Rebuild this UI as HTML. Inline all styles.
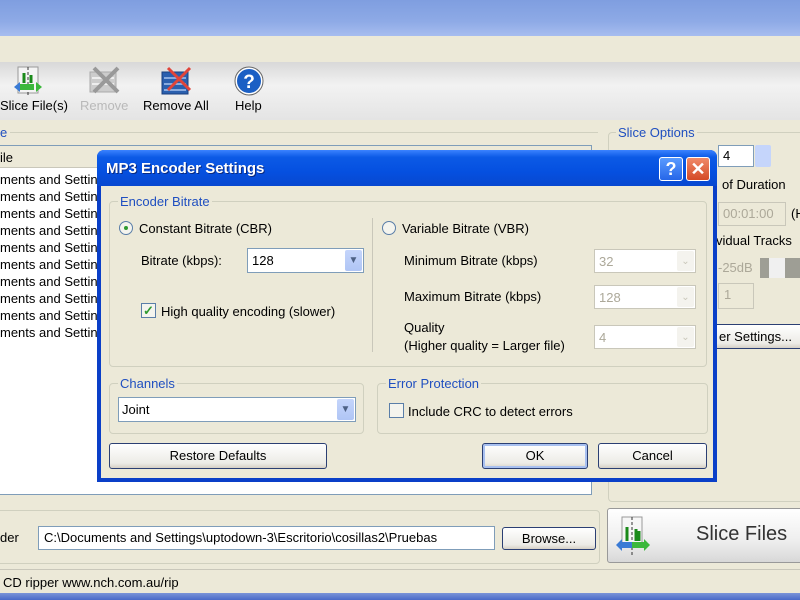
<!DOCTYPE html>
<html><head><meta charset="utf-8"><style>
*{box-sizing:border-box;margin:0;padding:0}
body{width:800px;height:600px;overflow:hidden;background:#ece9d8;font-family:"Liberation Sans",sans-serif;font-size:13px;color:#000;position:relative}
.a{position:absolute}
.t{position:absolute;white-space:nowrap}
.grp{position:absolute;border:1px solid #d0d0bf;border-radius:4px}
.gl{position:absolute;background:#ece9d8;color:#1f4fc0;padding:0 2px;white-space:nowrap}
.btn{position:absolute;border:1px solid #2b3f73;border-radius:3px;background:linear-gradient(#fff,#ecebe6 80%,#d6d0c5);text-align:center}
.combo{position:absolute;background:#fff;border:1px solid #7f9db9}
.combo .dd{position:absolute;right:1px;top:1px;bottom:1px;width:17px;background:linear-gradient(#c5d5fb,#b0c5f5);border-radius:2px;color:#4d6185;font-size:10px;text-align:center}
.dis{border-color:#c9c7ba;color:#aca899}
.dis .dd{background:#f4f3ee;color:#c9c7ba}
</style></head><body>
<!-- title bar -->
<div class="a" style="left:0;top:0;width:800px;height:36px;background:linear-gradient(#7f9ee0,#8eaae6 60%,#a7bdef)"></div>
<div class="a" style="left:0;top:36px;width:800px;height:26px;background:#ece9d8"></div>
<!-- toolbar -->
<div class="a" style="left:0;top:62px;width:800px;height:58px;background:linear-gradient(#d8d8d8,#f2f2f2 40%,#e4e4e4)"></div>
<svg class="a" style="left:12px;top:65px" width="36" height="32"><rect x="6" y="2" width="20" height="26" fill="#f4f4f4" stroke="#999"/><path d="M16 2V30" stroke="#333" stroke-dasharray="3 2"/><path d="M2 22l6-5v10z" fill="#3a7bd5"/><path d="M30 22l-6-5v10z" fill="#3cb83c"/><rect x="8" y="19" width="14" height="6" fill="#3cb83c"/><path d="M12 8v10M19 10v8" stroke="#1a8a1a" stroke-width="3"/></svg>
<div class="t" style="left:0;top:98px">Slice File(s)</div>
<svg class="a" style="left:88px;top:66px" width="34" height="30"><rect x="2" y="6" width="26" height="20" fill="#ccc" stroke="#aaa"/><path d="M4 12h22M4 18h22" stroke="#eee" stroke-width="2"/><path d="M6 2L30 26M30 2L6 26" stroke="#999" stroke-width="4"/></svg>
<div class="t" style="left:80px;top:98px;color:#b9b9b9">Remove</div>
<svg class="a" style="left:160px;top:66px" width="34" height="30"><rect x="2" y="6" width="26" height="22" fill="#2a5fae" stroke="#1a3f7e"/><path d="M4 12h22M4 18h22M4 24h22" stroke="#a8c4ee" stroke-width="1.5"/><path d="M8 2L30 24M30 2L8 24" stroke="#e0453a" stroke-width="3"/></svg>
<div class="t" style="left:143px;top:98px">Remove All</div>
<svg class="a" style="left:234px;top:66px" width="30" height="30"><circle cx="15" cy="15" r="13" fill="#1b5fc4" stroke="#fff" stroke-width="2"/><circle cx="15" cy="15" r="14" fill="none" stroke="#666"/><text x="15" y="22" text-anchor="middle" font-family="Liberation Sans" font-weight="bold" font-size="19" fill="#fff">?</text></svg>
<div class="t" style="left:235px;top:98px">Help</div>
<!-- left list -->
<div class="t" style="left:0;top:125px;color:#1f4fc0">e</div>
<div class="a" style="left:10px;top:132px;width:588px;height:1px;background:#d0d0bf"></div>
<div class="a" style="left:0;top:145px;width:592px;height:350px;background:#fff;border:1px solid #7f9db9;border-left:none"></div>
<div class="a" style="left:0;top:146px;width:591px;height:22px;background:#ece9d8;border-bottom:1px solid #c9c7ba"></div>
<div class="t" style="left:0;top:150px">ile</div>
<div class="t" style="left:0;top:171px;line-height:17px">ments and Setting<br>ments and Setting<br>ments and Setting<br>ments and Setting<br>ments and Setting<br>ments and Setting<br>ments and Setting<br>ments and Setting<br>ments and Setting<br>ments and Setting</div>
<!-- right slice options -->
<div class="grp" style="left:608px;top:132px;width:200px;height:370px"></div>
<div class="gl" style="left:616px;top:125px">Slice Options</div>
<div class="a" style="left:718px;top:145px;width:36px;height:22px;background:#fff;border:1px solid #7f9db9"></div>
<div class="t" style="left:723px;top:148px">4</div>
<div class="a" style="left:755px;top:145px;width:16px;height:22px;background:#c5d5fb;border-radius:2px"></div>
<div class="t" style="left:722px;top:177px">of Duration</div>
<div class="a" style="left:718px;top:202px;width:68px;height:24px;border:1px solid #c9c7ba"></div>
<div class="t" style="left:723px;top:206px;color:#aca899">00:01:00</div>
<div class="t" style="left:791px;top:206px">(H</div>
<div class="t" style="left:716px;top:233px">vidual Tracks</div>
<div class="t" style="left:718px;top:260px;color:#aca899">-25dB</div>
<div class="a" style="left:760px;top:258px;width:40px;height:20px;background:#9e9e95"></div>
<div class="a" style="left:769px;top:258px;width:16px;height:20px;background:#f0f0f0"></div>
<div class="a" style="left:718px;top:283px;width:36px;height:26px;border:1px solid #c9c7ba"></div>
<div class="t" style="left:724px;top:287px;color:#aca899">1</div>
<div class="btn" style="left:700px;top:324px;width:110px;height:25px;line-height:23px;text-align:left;padding-left:18px">er Settings...</div>
<!-- bottom -->
<div class="grp" style="left:-5px;top:510px;width:605px;height:54px"></div>
<div class="t" style="left:0;top:530px">der</div>
<div class="a" style="left:38px;top:526px;width:457px;height:24px;background:#fff;border:1px solid #7f9db9"></div>
<div class="t" style="left:44px;top:530px">C:\Documents and Settings\uptodown-3\Escritorio\cosillas2\Pruebas</div>
<div class="btn" style="left:502px;top:527px;width:94px;height:23px;line-height:21px">Browse...</div>
<div class="btn" style="left:607px;top:508px;width:200px;height:55px;border-color:#999;background:linear-gradient(#fff,#eee 60%,#d8d8d8)"></div>
<svg class="a" style="left:614px;top:515px" width="40" height="40"><rect x="8" y="2" width="20" height="30" fill="#f6f6f6" stroke="#999"/><path d="M18 2V40" stroke="#333" stroke-dasharray="3 2"/><path d="M2 30l6-6v12z" fill="#3a7bd5"/><rect x="6" y="27" width="12" height="6" fill="#3a7bd5"/><path d="M36 30l-6-6v12z" fill="#3cb83c"/><rect x="18" y="27" width="12" height="6" fill="#3cb83c"/><path d="M13 12v14M22 14v12M25 16v10" stroke="#1a8a1a" stroke-width="3"/></svg>
<div class="t" style="left:696px;top:523px;font-size:20px;color:#333">Slice Files</div>
<div class="a" style="left:0;top:569px;width:800px;height:1px;background:#c9c7ba"></div>
<div class="t" style="left:3px;top:575px">CD ripper www.nch.com.au/rip</div>
<div class="a" style="left:0;top:593px;width:800px;height:7px;background:linear-gradient(#7a94d8,#4a6ac8)"></div>
<!-- dialog -->
<div class="a" style="left:97px;top:150px;width:620px;height:332px;background:#0a3fc8;border-radius:7px 7px 0 0"></div>
<div class="a" style="left:97px;top:150px;width:620px;height:36px;border-radius:7px 7px 0 0;background:linear-gradient(#3b83ff,#0c5ae6 20%,#0550e0 60%,#0848d0)"></div>
<div class="t" style="left:106px;top:160px;color:#fff;font-weight:bold;font-size:15px;text-shadow:1px 1px #0a2a80">MP3 Encoder Settings</div>
<div class="a" style="left:659px;top:157px;width:24px;height:24px;border:1px solid #fff;border-radius:3px;background:linear-gradient(#5a9bff,#2666e8);color:#fff;font-weight:bold;font-size:18px;text-align:center;line-height:22px">?</div>
<div class="a" style="left:686px;top:157px;width:24px;height:24px;border:1px solid #fff;border-radius:3px;background:linear-gradient(#f08a6a,#d44a26);color:#fff;font-weight:bold;font-size:18px;text-align:center;line-height:22px">✕</div>
<div class="a" style="left:101px;top:186px;width:612px;height:292px;background:#ece9d8"></div>
<div class="grp" style="left:109px;top:201px;width:598px;height:166px"></div>
<div class="gl" style="left:118px;top:194px">Encoder Bitrate</div>
<div class="a" style="left:372px;top:218px;width:1px;height:134px;background:#c9c7ba"></div>
<div class="a" style="left:119px;top:221px;width:14px;height:14px;border-radius:50%;border:1px solid #5a7ea8;background:#f4f4ee"></div>
<div class="a" style="left:124px;top:226px;width:4px;height:4px;border-radius:50%;background:#2f9a30"></div>
<div class="t" style="left:139px;top:221px">Constant Bitrate (CBR)</div>
<div class="t" style="left:141px;top:253px">Bitrate (kbps):</div>
<div class="combo" style="left:247px;top:248px;width:117px;height:25px"><span class="t" style="left:4px;top:4px">128</span><div class="dd" style="line-height:22px">&#9660;</div></div>
<div class="a" style="left:141px;top:303px;width:15px;height:15px;border:1px solid #5a7ea8;background:#f4f4ee;color:#2f9a30;font-size:13px;font-weight:bold;line-height:13px;text-align:center">✓</div>
<div class="t" style="left:161px;top:304px">High quality encoding (slower)</div>
<div class="a" style="left:382px;top:221px;width:14px;height:14px;border-radius:50%;border:1px solid #5a7ea8;background:#f4f4ee"></div>
<div class="t" style="left:402px;top:221px">Variable Bitrate (VBR)</div>
<div class="t" style="left:404px;top:253px">Minimum Bitrate (kbps)</div>
<div class="t" style="left:404px;top:289px">Maximum Bitrate (kbps)</div>
<div class="t" style="left:404px;top:319px;line-height:18px">Quality<br>(Higher quality = Larger file)</div>
<div class="combo dis" style="left:594px;top:249px;width:102px;height:24px"><span class="t" style="left:4px;top:4px">32</span><div class="dd" style="line-height:21px">&#8964;</div></div>
<div class="combo dis" style="left:594px;top:285px;width:102px;height:24px"><span class="t" style="left:4px;top:4px">128</span><div class="dd" style="line-height:21px">&#8964;</div></div>
<div class="combo dis" style="left:594px;top:325px;width:102px;height:24px"><span class="t" style="left:4px;top:4px">4</span><div class="dd" style="line-height:21px">&#8964;</div></div>
<div class="grp" style="left:109px;top:383px;width:255px;height:51px"></div>
<div class="gl" style="left:118px;top:376px">Channels</div>
<div class="combo" style="left:118px;top:397px;width:238px;height:25px"><span class="t" style="left:3px;top:4px">Joint</span><div class="dd" style="line-height:22px">&#9660;</div></div>
<div class="grp" style="left:377px;top:383px;width:331px;height:51px"></div>
<div class="gl" style="left:386px;top:376px">Error Protection</div>
<div class="a" style="left:389px;top:403px;width:15px;height:15px;border:1px solid #5a7ea8;background:#f4f4ee"></div>
<div class="t" style="left:408px;top:404px">Include CRC to detect errors</div>
<div class="btn" style="left:109px;top:443px;width:218px;height:26px;line-height:24px">Restore Defaults</div>
<div class="btn" style="left:482px;top:443px;width:106px;height:26px;line-height:24px;box-shadow:inset 0 0 0 2px #a8c0f0">OK</div>
<div class="btn" style="left:598px;top:443px;width:109px;height:26px;line-height:24px">Cancel</div>
</body></html>
